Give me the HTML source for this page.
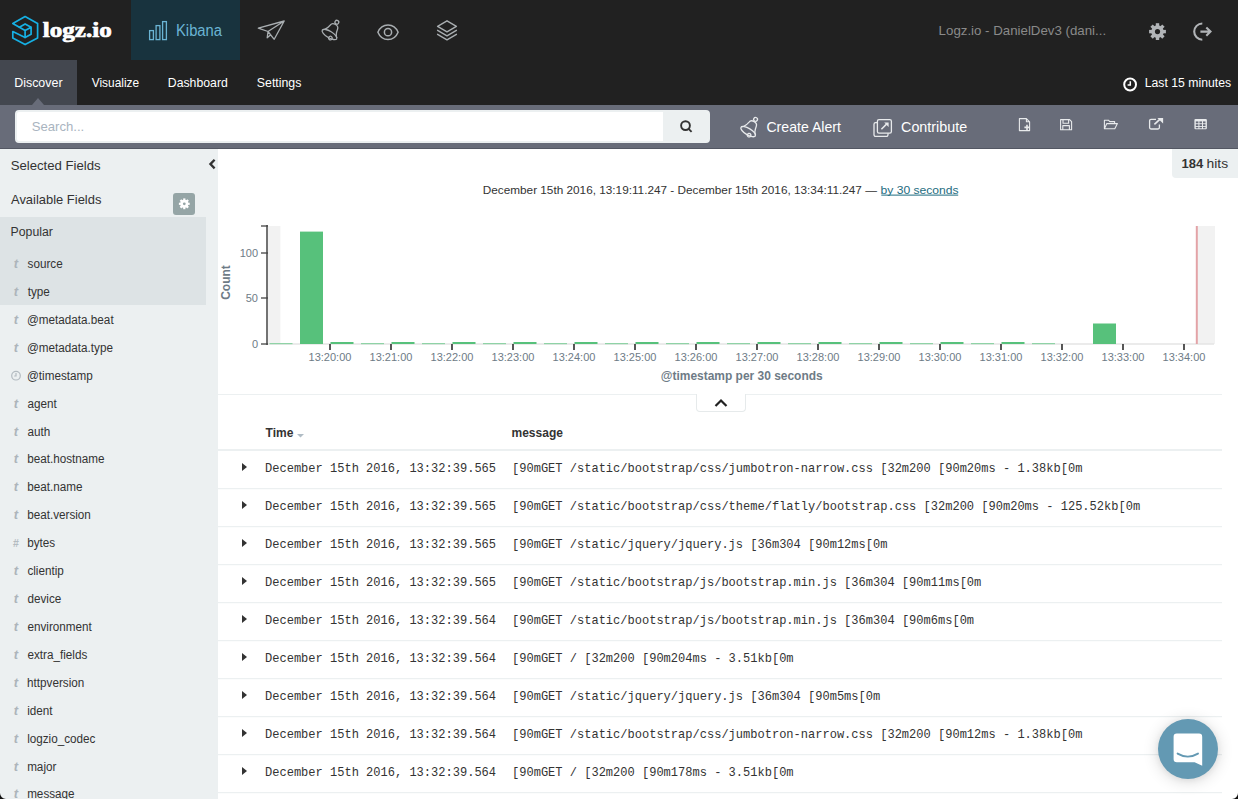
<!DOCTYPE html>
<html><head><meta charset="utf-8">
<style>
*{box-sizing:border-box;margin:0;padding:0}
html,body{width:1238px;height:799px;overflow:hidden;background:#fff;font-family:"Liberation Sans",sans-serif}
.abs{position:absolute}
#hdr{position:absolute;left:0;top:0;width:1238px;height:60px;background:#212121}
#kib{position:absolute;left:131px;top:0;width:109px;height:60px;background:#18333e}
#sub{position:absolute;left:0;top:60px;width:1238px;height:45px;background:#212121}
#disc{position:absolute;left:0;top:0;width:77px;height:45px;background:#43474f}
.nav{position:absolute;top:0;height:45px;line-height:45px;font-size:13px;color:#fff;white-space:nowrap}
#tb{position:absolute;left:0;top:105px;width:1238px;height:44px;background:#686c79;border-bottom:1px solid #535763}
#search{position:absolute;left:15px;top:5px;width:695px;height:33px;background:#fff;border-radius:4px;overflow:hidden;border:2px solid #ecf0f1}
#sbtn{position:absolute;right:0;top:0;width:45px;height:29px;background:#ecf0f1}
#side{position:absolute;left:0;top:149px;width:218px;height:650px;background:#ecf0f1}
#pop{position:absolute;left:0;top:68px;width:206px;height:88px;background:#dde3e5}
.fld{position:absolute;left:27px;font-size:13px;line-height:18px;color:#333;white-space:nowrap}
.ft{position:absolute;left:14px;font-size:13px;line-height:18px;color:#b9c1c7;font-style:italic;font-family:"Liberation Serif",serif}
.rl{position:absolute;left:218px;width:1003px;height:1px;background:#ecf0f1}
.mono{font-family:"Liberation Mono",monospace;font-size:12px;line-height:16px;color:#333;white-space:nowrap;position:absolute}
.arr{position:absolute;left:242px;width:0;height:0;border-top:4px solid transparent;border-bottom:4px solid transparent;border-left:5px solid #333}
.xl{position:absolute;top:350px;font-size:11px;line-height:14px;color:#6e7b86;white-space:nowrap;transform:translateX(-50%)}
.yl{position:absolute;font-size:11px;line-height:14px;color:#6e7b86;white-space:nowrap;text-align:right;width:40px}

</style></head><body>
<div id="hdr">
  <div id="kib"></div>
  <svg class="abs" style="left:0;top:0" width="470" height="60" viewBox="0 0 470 60">
    <g fill="none" stroke="#16b0e4" stroke-width="1.7" stroke-linejoin="round" stroke-linecap="round">
      <path d="M19.4 27.2L12.8 23.5L25.1 16.6L37.6 23.6V38L25.1 44.6L12.8 38V31.6L25.1 37.4"/>
      <path d="M19.4 27.2L25.1 23.9L31.1 27.2L25.1 30.6Z M25.1 30.6V37.4 M31.1 27.2V34.2L25.1 37.4"/>
    </g>
    <g fill="none" stroke="#6ab4d4" stroke-width="1.3">
      <rect x="149.6" y="30.6" width="3.8" height="9"/>
      <rect x="156.1" y="25.6" width="3.8" height="14"/>
      <rect x="162.6" y="21.6" width="3.8" height="18"/>
    </g>
    <g fill="none" stroke="#a9aeb1" stroke-width="1.3" stroke-linejoin="round">
      <path d="M258.3 28.2L284.2 21L274.2 39.3L268 31.5Z M268 31.5L284.2 21 M268 31.5L267.2 37.8L271 34.6"/>
      <g transform="translate(329.5 34.5) rotate(31)" fill="none" stroke="#a9aeb1" stroke-width="1.3">
        <circle cx="0" cy="-14.3" r="1.9"/>
        <path d="M-8.3 -0.6C-5.8 -2.4,-4.8 -5.5,-4.2 -8.6C-3.6 -12.6,3.6 -12.6,4.2 -8.6C4.7 -5.5,5.6 -2.4,8.3 -0.6"/>
        <ellipse cx="0" cy="0" rx="8.4" ry="3.2"/>
        <circle cx="2.6" cy="2.6" r="1.8"/>
      </g>
      <path d="M377.9 32.2C379.8 27.6,383.6 24.9,388 24.9C392.4 24.9,396.2 27.6,398.1 32.2C396.2 36.8,392.4 39.5,388 39.5C383.6 39.5,379.8 36.8,377.9 32.2Z" stroke-width="1.5"/>
      <circle cx="388" cy="32.2" r="3.6" stroke-width="1.5"/>
      <path d="M447 20.8L437.6 26.3L447 31.8L456.4 26.3Z M437.6 30.3L447 35.8L456.4 30.3 M437.6 34.3L447 39.8L456.4 34.3" stroke-width="1.4" stroke-linecap="round"/>
    </g>
  </svg>
  <svg class="abs" style="left:1140px;top:14px" width="80" height="36" viewBox="1140 14 80 36">
    <g fill="#b1b4b7">
      <g transform="translate(1157.5 31.6)">
        <rect x="-1.7" y="-8.4" width="3.4" height="16.8"/>
        <rect x="-1.7" y="-8.4" width="3.4" height="16.8" transform="rotate(45)"/>
        <rect x="-1.7" y="-8.4" width="3.4" height="16.8" transform="rotate(90)"/>
        <rect x="-1.7" y="-8.4" width="3.4" height="16.8" transform="rotate(135)"/>
        <circle r="6.3"/>
        <circle r="2.6" fill="#212121"/>
      </g>
    </g>
    <g fill="none" stroke="#b1b4b7" stroke-width="2.1">
      <path d="M1202.3 23.5A8.1 8.1 0 0 0 1202.3 39.7"/>
      <path d="M1200.4 31.6H1210.2 M1206.3 27.5L1210.5 31.6L1206.3 35.7"/>
    </g>
  </svg>
</div>
<div id="sub">
  <div id="disc"></div>
  <div class="abs" style="left:32px;top:38px;width:0;height:0;border-left:6.5px solid transparent;border-right:6.5px solid transparent;border-bottom:7px solid #686c79"></div>
  <svg class="abs" style="left:1120px;top:14px" width="20" height="20" viewBox="1120 74 20 20">
    <circle cx="1130.1" cy="84.5" r="5.9" fill="none" stroke="#fff" stroke-width="2"/>
    <path d="M1130.3 81.3V85H1127.6" fill="none" stroke="#fff" stroke-width="1.5"/>
  </svg>
</div>
<div id="tb">
  <div id="search">
    <div id="sbtn"></div>
  </div>
  <svg class="abs" style="left:0;top:0" width="1238" height="44" viewBox="0 105 1238 44">
    <g fill="none" stroke="#333" stroke-width="1.9"><circle cx="685.5" cy="125.6" r="4.4"/><path d="M688.6 128.8L691.6 131.8"/></g>
    <g fill="none" stroke="#e8eaec" stroke-width="1.3" stroke-linejoin="round">
      <g transform="translate(748.2 131.6) rotate(31)" fill="none" stroke="#e8eaec" stroke-width="1.3">
        <circle cx="0" cy="-14.3" r="1.9"/>
        <path d="M-8.3 -0.6C-5.8 -2.4,-4.8 -5.5,-4.2 -8.6C-3.6 -12.6,3.6 -12.6,4.2 -8.6C4.7 -5.5,5.6 -2.4,8.3 -0.6"/>
        <ellipse cx="0" cy="0" rx="8.4" ry="3.2"/>
        <circle cx="2.6" cy="2.6" r="1.8"/>
      </g>
      <rect x="877.4" y="119.6" width="14" height="13.6" rx="1.6"/>
      <path d="M877.4 122.6H875.6A1.6 1.6 0 0 0 874 124.2V134.8A1.6 1.6 0 0 0 875.6 136.4H886.4A1.6 1.6 0 0 0 888 134.8V133.2"/>
      <path d="M881.4 129.2L887 123.6" stroke-width="1.5"/>
    </g>
    <path d="M884.2 122.6H888.6V127Z" fill="#e8eaec"/>
    <g fill="none" stroke="#e8eaec" stroke-width="1.1" stroke-linejoin="round">
      <path d="M1019.4 118.6H1026.4L1029.6 121.8V130.6H1019.4Z M1026.4 118.6V121.8H1029.6"/>
      <path d="M1027 124.8V130 M1024.4 127.4H1029.6" stroke-width="1.6"/>
      <path d="M1060.6 119.6H1069.6L1071.6 121.6V129.8H1060.6Z M1063 119.6V123.2H1068.6V119.6 M1062.8 129.8V125.6H1069.4V129.8"/>
      <path d="M1104.4 128.8V120.2H1108.4L1109.8 121.6H1114.6V123.4 M1104.4 128.8L1106.8 123.6H1117.4L1114.8 128.8Z"/>
      <path d="M1156 119.4H1151A1.4 1.4 0 0 0 1149.6 120.8V127.6A1.4 1.4 0 0 0 1151 129H1158A1.4 1.4 0 0 0 1159.4 127.6V124.6" stroke-width="1.3"/>
      <path d="M1154.4 124.4L1160.6 118.6" stroke-width="1.6"/>
    </g>
    <path d="M1157.4 117.9H1163.1V123.6Z" fill="#e8eaec"/>
    <g fill="#e8eaec">
      <rect x="1194.4" y="118.9" width="12.5" height="10.4" rx="1.2"/>
    </g>
    <g fill="#686c79">
      <rect x="1195.8" y="121.4" width="2.6" height="1.9"/><rect x="1199.4" y="121.4" width="2.6" height="1.9"/><rect x="1203" y="121.4" width="2.5" height="1.9"/>
      <rect x="1195.8" y="124.2" width="2.6" height="1.9"/><rect x="1199.4" y="124.2" width="2.6" height="1.9"/><rect x="1203" y="124.2" width="2.5" height="1.9"/>
      <rect x="1195.8" y="127" width="2.6" height="1.3"/><rect x="1199.4" y="127" width="2.6" height="1.3"/><rect x="1203" y="127" width="2.5" height="1.3"/>
    </g>
  </svg>
</div>

<div id="side"><div id="pop"></div></div>
<div class="abs" style="left:218px;top:394px;width:1004px;height:1px;background:#ecf0f1"></div>
<div class="abs" style="left:696px;top:394px;width:50px;height:18px;background:#fff;border:1px solid #e6eaeb;border-top:none;border-radius:0 0 4px 4px"></div>
<svg class="abs" style="left:713px;top:397px" width="16" height="12" viewBox="0 0 16 12"><path d="M2.5 9L8 3.5L13.5 9" fill="none" stroke="#222" stroke-width="2.2"/></svg>
<svg class="abs" style="left:296px;top:433px" width="10" height="6" viewBox="0 0 10 6"><path d="M1 1H8L4.5 4.5Z" fill="#b0bcc5"/></svg>
<div class="abs" style="left:218px;top:449px;width:1004px;height:2px;background:#ecf0f1"></div>
<svg class="abs" style="left:200px;top:150px" width="20" height="25" viewBox="200 150 20 25"><path d="M214.6 159.8L210.4 164.1L214.6 168.4" fill="none" stroke="#333" stroke-width="2.3"/></svg>
<div class="abs" style="left:173px;top:193px;width:22px;height:22px;background:#95a5a6;border-radius:3px"></div>
<svg class="abs" style="left:173px;top:193px" width="22" height="22" viewBox="173 193 22 22"><g transform="translate(184.3 203.8)" fill="#fff"><rect x="-1.1" y="-5.4" width="2.2" height="10.8"/><rect x="-1.1" y="-5.4" width="2.2" height="10.8" transform="rotate(45)"/><rect x="-1.1" y="-5.4" width="2.2" height="10.8" transform="rotate(90)"/><rect x="-1.1" y="-5.4" width="2.2" height="10.8" transform="rotate(135)"/><circle r="4"/><circle r="1.4" fill="#95a5a6"/></g></svg>
<div class="abs" style="left:1172px;top:149px;width:66px;height:29px;background:#ecf0f1;border-bottom-left-radius:4px"></div>

<svg class="abs" style="left:0;top:0" width="1238" height="799" viewBox="0 0 1238 799">
<rect x="268" y="226" width="12.4" height="118" fill="#f2f2f2"/>
<rect x="1196" y="226" width="19" height="118" fill="#f2f2f2"/>
<line x1="268" y1="344" x2="1214" y2="344" stroke="#e4e4e4" stroke-width="1.5"/>
<rect x="269.5" y="343" width="23" height="1.2" fill="#8fd3a6"/>
<rect x="300.0" y="231.6" width="23" height="112.4" fill="#57c17b"/>
<rect x="330.5" y="342" width="23" height="2" fill="#57c17b"/>
<rect x="361.0" y="343" width="23" height="1.2" fill="#8fd3a6"/>
<rect x="391.5" y="342" width="23" height="2" fill="#57c17b"/>
<rect x="422.0" y="343" width="23" height="1.2" fill="#8fd3a6"/>
<rect x="452.5" y="342" width="23" height="2" fill="#57c17b"/>
<rect x="483.0" y="343" width="23" height="1.2" fill="#8fd3a6"/>
<rect x="513.5" y="342" width="23" height="2" fill="#57c17b"/>
<rect x="544.0" y="343" width="23" height="1.2" fill="#8fd3a6"/>
<rect x="574.5" y="342" width="23" height="2" fill="#57c17b"/>
<rect x="605.0" y="343" width="23" height="1.2" fill="#8fd3a6"/>
<rect x="635.5" y="342" width="23" height="2" fill="#57c17b"/>
<rect x="666.0" y="343" width="23" height="1.2" fill="#8fd3a6"/>
<rect x="696.5" y="342" width="23" height="2" fill="#57c17b"/>
<rect x="727.0" y="343" width="23" height="1.2" fill="#8fd3a6"/>
<rect x="757.5" y="342" width="23" height="2" fill="#57c17b"/>
<rect x="788.0" y="343" width="23" height="1.2" fill="#8fd3a6"/>
<rect x="818.5" y="342" width="23" height="2" fill="#57c17b"/>
<rect x="849.0" y="343" width="23" height="1.2" fill="#8fd3a6"/>
<rect x="879.5" y="342" width="23" height="2" fill="#57c17b"/>
<rect x="910.0" y="343" width="23" height="1.2" fill="#8fd3a6"/>
<rect x="940.5" y="342" width="23" height="2" fill="#57c17b"/>
<rect x="971.0" y="343" width="23" height="1.2" fill="#8fd3a6"/>
<rect x="1001.5" y="342" width="23" height="2" fill="#57c17b"/>
<rect x="1032.0" y="343" width="23" height="1.2" fill="#8fd3a6"/>
<rect x="1093.0" y="323.5" width="23" height="20.5" fill="#57c17b"/>
<line x1="267" y1="225" x2="267" y2="345" stroke="#444" stroke-width="1.5"/>
<line x1="261" y1="226" x2="268" y2="226" stroke="#444" stroke-width="1.3"/>
<line x1="261" y1="253" x2="268" y2="253" stroke="#444" stroke-width="1.3"/>
<line x1="261" y1="298" x2="268" y2="298" stroke="#444" stroke-width="1.3"/>
<line x1="261" y1="344" x2="268" y2="344" stroke="#444" stroke-width="1.3"/>
<line x1="330" y1="344" x2="330" y2="350" stroke="#444" stroke-width="1.8"/>
<line x1="391" y1="344" x2="391" y2="350" stroke="#444" stroke-width="1.8"/>
<line x1="452" y1="344" x2="452" y2="350" stroke="#444" stroke-width="1.8"/>
<line x1="513" y1="344" x2="513" y2="350" stroke="#444" stroke-width="1.8"/>
<line x1="574" y1="344" x2="574" y2="350" stroke="#444" stroke-width="1.8"/>
<line x1="635" y1="344" x2="635" y2="350" stroke="#444" stroke-width="1.8"/>
<line x1="696" y1="344" x2="696" y2="350" stroke="#444" stroke-width="1.8"/>
<line x1="757" y1="344" x2="757" y2="350" stroke="#444" stroke-width="1.8"/>
<line x1="818" y1="344" x2="818" y2="350" stroke="#444" stroke-width="1.8"/>
<line x1="879" y1="344" x2="879" y2="350" stroke="#444" stroke-width="1.8"/>
<line x1="940" y1="344" x2="940" y2="350" stroke="#444" stroke-width="1.8"/>
<line x1="1001" y1="344" x2="1001" y2="350" stroke="#444" stroke-width="1.8"/>
<line x1="1062" y1="344" x2="1062" y2="350" stroke="#444" stroke-width="1.8"/>
<line x1="1123" y1="344" x2="1123" y2="350" stroke="#444" stroke-width="1.8"/>
<line x1="1184" y1="344" x2="1184" y2="350" stroke="#444" stroke-width="1.8"/>
<line x1="1196.8" y1="226" x2="1196.8" y2="344" stroke="#e3a3a7" stroke-width="2"/>
</svg>
<svg class="abs" style="left:0;top:0" width="1238" height="799" viewBox="0 0 1238 799">
<path d="M242 463L247 467L242 471Z" fill="#333"/><rect x="218" y="488" width="1004" height="1.2" fill="#ecf0f1"/><path d="M242 501L247 505L242 509Z" fill="#333"/><rect x="218" y="526" width="1004" height="1.2" fill="#ecf0f1"/><path d="M242 539L247 543L242 547Z" fill="#333"/><rect x="218" y="564" width="1004" height="1.2" fill="#ecf0f1"/><path d="M242 577L247 581L242 585Z" fill="#333"/><rect x="218" y="602" width="1004" height="1.2" fill="#ecf0f1"/><path d="M242 615L247 619L242 623Z" fill="#333"/><rect x="218" y="640" width="1004" height="1.2" fill="#ecf0f1"/><path d="M242 653L247 657L242 661Z" fill="#333"/><rect x="218" y="678" width="1004" height="1.2" fill="#ecf0f1"/><path d="M242 691L247 695L242 699Z" fill="#333"/><rect x="218" y="716" width="1004" height="1.2" fill="#ecf0f1"/><path d="M242 729L247 733L242 737Z" fill="#333"/><rect x="218" y="754" width="1004" height="1.2" fill="#ecf0f1"/><path d="M242 767L247 771L242 775Z" fill="#333"/><rect x="218" y="792" width="1004" height="1.2" fill="#ecf0f1"/>
<g fill="none" stroke="#b3bbc1" stroke-width="1.2"><circle cx="16" cy="375.68" r="4.3"/><path d="M16 373.08V375.98H14.2"/></g>
<text x="42.80" y="37.00" font-size="20" fill="#fff" font-weight="bold" style="font-family:'Liberation Serif',serif" textLength="68.89" lengthAdjust="spacingAndGlyphs" stroke="#fff" stroke-width="0.7">logz.io</text>
<text x="176.02" y="36.20" font-size="16" fill="#6ab4d4" font-weight="normal" style="font-family:'Liberation Sans',sans-serif" textLength="45.96" lengthAdjust="spacingAndGlyphs">Kibana</text>
<text x="938.64" y="35.20" font-size="13" fill="#8a8a8a" font-weight="normal" style="font-family:'Liberation Sans',sans-serif" textLength="167.50" lengthAdjust="spacingAndGlyphs">Logz.io - DanielDev3 (dani...</text>
<text x="14.21" y="87.20" font-size="12.6" fill="#fff" font-weight="normal" style="font-family:'Liberation Sans',sans-serif" textLength="48.34" lengthAdjust="spacingAndGlyphs">Discover</text>
<text x="91.74" y="87.20" font-size="12.6" fill="#fff" font-weight="normal" style="font-family:'Liberation Sans',sans-serif" textLength="47.38" lengthAdjust="spacingAndGlyphs">Visualize</text>
<text x="167.82" y="87.30" font-size="12.6" fill="#fff" font-weight="normal" style="font-family:'Liberation Sans',sans-serif" textLength="60.01" lengthAdjust="spacingAndGlyphs">Dashboard</text>
<text x="256.84" y="87.30" font-size="12.6" fill="#fff" font-weight="normal" style="font-family:'Liberation Sans',sans-serif" textLength="44.57" lengthAdjust="spacingAndGlyphs">Settings</text>
<text x="1144.72" y="86.60" font-size="12" fill="#fff" font-weight="normal" style="font-family:'Liberation Sans',sans-serif" textLength="86.40" lengthAdjust="spacingAndGlyphs">Last 15 minutes</text>
<text x="31.71" y="131.10" font-size="13.3" fill="#a9b4c0" font-weight="normal" style="font-family:'Liberation Sans',sans-serif" textLength="52.50" lengthAdjust="spacingAndGlyphs">Search...</text>
<text x="766.39" y="132.40" font-size="14.6" fill="#fff" font-weight="normal" style="font-family:'Liberation Sans',sans-serif" textLength="74.58" lengthAdjust="spacingAndGlyphs">Create Alert</text>
<text x="901.08" y="132.40" font-size="14.6" fill="#fff" font-weight="normal" style="font-family:'Liberation Sans',sans-serif" textLength="66.04" lengthAdjust="spacingAndGlyphs">Contribute</text>
<text x="10.71" y="170.30" font-size="13" fill="#333" font-weight="normal" style="font-family:'Liberation Sans',sans-serif" textLength="89.98" lengthAdjust="spacingAndGlyphs">Selected Fields</text>
<text x="11.00" y="203.90" font-size="13" fill="#333" font-weight="normal" style="font-family:'Liberation Sans',sans-serif" textLength="90.36" lengthAdjust="spacingAndGlyphs">Available Fields</text>
<text x="10.62" y="236.40" font-size="12" fill="#333" font-weight="normal" style="font-family:'Liberation Sans',sans-serif" textLength="42.29" lengthAdjust="spacingAndGlyphs">Popular</text>
<text x="27.55" y="268.00" font-size="12" fill="#333" font-weight="normal" style="font-family:'Liberation Sans',sans-serif" textLength="35.12" lengthAdjust="spacingAndGlyphs">source</text>
<text x="13.87" y="268.00" font-size="13" fill="#adb5bb" font-weight="bold" style="font-family:'Liberation Sans',sans-serif" font-style="italic">t</text>
<text x="27.72" y="295.92" font-size="12" fill="#333" font-weight="normal" style="font-family:'Liberation Sans',sans-serif" textLength="22.11" lengthAdjust="spacingAndGlyphs">type</text>
<text x="13.87" y="295.92" font-size="13" fill="#adb5bb" font-weight="bold" style="font-family:'Liberation Sans',sans-serif" font-style="italic">t</text>
<text x="26.96" y="323.84" font-size="12" fill="#333" font-weight="normal" style="font-family:'Liberation Sans',sans-serif" textLength="86.68" lengthAdjust="spacingAndGlyphs">@metadata.beat</text>
<text x="13.87" y="323.84" font-size="13" fill="#adb5bb" font-weight="bold" style="font-family:'Liberation Sans',sans-serif" font-style="italic">t</text>
<text x="26.96" y="351.76" font-size="12" fill="#333" font-weight="normal" style="font-family:'Liberation Sans',sans-serif" textLength="86.03" lengthAdjust="spacingAndGlyphs">@metadata.type</text>
<text x="13.87" y="351.76" font-size="13" fill="#adb5bb" font-weight="bold" style="font-family:'Liberation Sans',sans-serif" font-style="italic">t</text>
<text x="26.96" y="379.68" font-size="12" fill="#333" font-weight="normal" style="font-family:'Liberation Sans',sans-serif" textLength="65.84" lengthAdjust="spacingAndGlyphs">@timestamp</text>
<text x="27.43" y="407.60" font-size="12" fill="#333" font-weight="normal" style="font-family:'Liberation Sans',sans-serif" textLength="29.28" lengthAdjust="spacingAndGlyphs">agent</text>
<text x="13.87" y="407.60" font-size="13" fill="#adb5bb" font-weight="bold" style="font-family:'Liberation Sans',sans-serif" font-style="italic">t</text>
<text x="27.43" y="435.52" font-size="12" fill="#333" font-weight="normal" style="font-family:'Liberation Sans',sans-serif" textLength="22.77" lengthAdjust="spacingAndGlyphs">auth</text>
<text x="13.87" y="435.52" font-size="13" fill="#adb5bb" font-weight="bold" style="font-family:'Liberation Sans',sans-serif" font-style="italic">t</text>
<text x="27.14" y="463.44" font-size="12" fill="#333" font-weight="normal" style="font-family:'Liberation Sans',sans-serif" textLength="77.41" lengthAdjust="spacingAndGlyphs">beat.hostname</text>
<text x="13.87" y="463.44" font-size="13" fill="#adb5bb" font-weight="bold" style="font-family:'Liberation Sans',sans-serif" font-style="italic">t</text>
<text x="27.14" y="491.36" font-size="12" fill="#333" font-weight="normal" style="font-family:'Liberation Sans',sans-serif" textLength="55.29" lengthAdjust="spacingAndGlyphs">beat.name</text>
<text x="13.87" y="491.36" font-size="13" fill="#adb5bb" font-weight="bold" style="font-family:'Liberation Sans',sans-serif" font-style="italic">t</text>
<text x="27.14" y="519.28" font-size="12" fill="#333" font-weight="normal" style="font-family:'Liberation Sans',sans-serif" textLength="63.74" lengthAdjust="spacingAndGlyphs">beat.version</text>
<text x="13.87" y="519.28" font-size="13" fill="#adb5bb" font-weight="bold" style="font-family:'Liberation Sans',sans-serif" font-style="italic">t</text>
<text x="27.14" y="547.20" font-size="12" fill="#333" font-weight="normal" style="font-family:'Liberation Sans',sans-serif" textLength="27.96" lengthAdjust="spacingAndGlyphs">bytes</text>
<text x="13.04" y="546.70" font-size="10.5" fill="#b3bbc1" font-weight="bold" style="font-family:'Liberation Sans',sans-serif">#</text>
<text x="27.43" y="575.12" font-size="12" fill="#333" font-weight="normal" style="font-family:'Liberation Sans',sans-serif" textLength="36.42" lengthAdjust="spacingAndGlyphs">clientip</text>
<text x="13.87" y="575.12" font-size="13" fill="#adb5bb" font-weight="bold" style="font-family:'Liberation Sans',sans-serif" font-style="italic">t</text>
<text x="27.43" y="603.04" font-size="12" fill="#333" font-weight="normal" style="font-family:'Liberation Sans',sans-serif" textLength="33.82" lengthAdjust="spacingAndGlyphs">device</text>
<text x="13.87" y="603.04" font-size="13" fill="#adb5bb" font-weight="bold" style="font-family:'Liberation Sans',sans-serif" font-style="italic">t</text>
<text x="27.43" y="630.96" font-size="12" fill="#333" font-weight="normal" style="font-family:'Liberation Sans',sans-serif" textLength="64.39" lengthAdjust="spacingAndGlyphs">environment</text>
<text x="13.87" y="630.96" font-size="13" fill="#adb5bb" font-weight="bold" style="font-family:'Liberation Sans',sans-serif" font-style="italic">t</text>
<text x="27.43" y="658.88" font-size="12" fill="#333" font-weight="normal" style="font-family:'Liberation Sans',sans-serif" textLength="59.83" lengthAdjust="spacingAndGlyphs">extra_fields</text>
<text x="13.87" y="658.88" font-size="13" fill="#adb5bb" font-weight="bold" style="font-family:'Liberation Sans',sans-serif" font-style="italic">t</text>
<text x="27.08" y="686.80" font-size="12" fill="#333" font-weight="normal" style="font-family:'Liberation Sans',sans-serif" textLength="57.23" lengthAdjust="spacingAndGlyphs">httpversion</text>
<text x="13.87" y="686.80" font-size="13" fill="#adb5bb" font-weight="bold" style="font-family:'Liberation Sans',sans-serif" font-style="italic">t</text>
<text x="27.14" y="714.72" font-size="12" fill="#333" font-weight="normal" style="font-family:'Liberation Sans',sans-serif" textLength="25.37" lengthAdjust="spacingAndGlyphs">ident</text>
<text x="13.87" y="714.72" font-size="13" fill="#adb5bb" font-weight="bold" style="font-family:'Liberation Sans',sans-serif" font-style="italic">t</text>
<text x="27.14" y="742.64" font-size="12" fill="#333" font-weight="normal" style="font-family:'Liberation Sans',sans-serif" textLength="68.30" lengthAdjust="spacingAndGlyphs">logzio_codec</text>
<text x="13.87" y="742.64" font-size="13" fill="#adb5bb" font-weight="bold" style="font-family:'Liberation Sans',sans-serif" font-style="italic">t</text>
<text x="27.14" y="770.56" font-size="12" fill="#333" font-weight="normal" style="font-family:'Liberation Sans',sans-serif" textLength="29.26" lengthAdjust="spacingAndGlyphs">major</text>
<text x="13.87" y="770.56" font-size="13" fill="#adb5bb" font-weight="bold" style="font-family:'Liberation Sans',sans-serif" font-style="italic">t</text>
<text x="27.14" y="798.48" font-size="12" fill="#333" font-weight="normal" style="font-family:'Liberation Sans',sans-serif" textLength="47.48" lengthAdjust="spacingAndGlyphs">message</text>
<text x="13.87" y="798.48" font-size="13" fill="#adb5bb" font-weight="bold" style="font-family:'Liberation Sans',sans-serif" font-style="italic">t</text>
<text x="482.76" y="193.80" font-size="11.6" fill="#333" font-weight="normal" style="font-family:'Liberation Sans',sans-serif" textLength="394.16" lengthAdjust="spacingAndGlyphs">December 15th 2016, 13:19:11.247 - December 15th 2016, 13:34:11.247 —</text>
<text x="880.51" y="193.80" font-size="11.6" fill="#1e6c80" font-weight="normal" style="font-family:'Liberation Sans',sans-serif" textLength="78.10" lengthAdjust="spacingAndGlyphs">by 30 seconds</text>
<rect x="881.3" y="194.6" width="76.9" height="1" fill="#1e6c80"/>
<text x="1181.62" y="168.00" font-size="13" fill="#333" font-weight="bold" style="font-family:'Liberation Sans',sans-serif">184</text>
<text x="1206.53" y="168.00" font-size="13" fill="#333" font-weight="normal" style="font-family:'Liberation Sans',sans-serif" textLength="21.57" lengthAdjust="spacingAndGlyphs">hits</text>
<text x="660.84" y="379.60" font-size="12" fill="#6e7b86" font-weight="bold" style="font-family:'Liberation Sans',sans-serif" textLength="161.85" lengthAdjust="spacingAndGlyphs">@timestamp per 30 seconds</text>
<text x="330" y="360.5" font-size="11" fill="#6e7b86" text-anchor="middle" style="font-family:'Liberation Sans',sans-serif">13:20:00</text>
<text x="391" y="360.5" font-size="11" fill="#6e7b86" text-anchor="middle" style="font-family:'Liberation Sans',sans-serif">13:21:00</text>
<text x="452" y="360.5" font-size="11" fill="#6e7b86" text-anchor="middle" style="font-family:'Liberation Sans',sans-serif">13:22:00</text>
<text x="513" y="360.5" font-size="11" fill="#6e7b86" text-anchor="middle" style="font-family:'Liberation Sans',sans-serif">13:23:00</text>
<text x="574" y="360.5" font-size="11" fill="#6e7b86" text-anchor="middle" style="font-family:'Liberation Sans',sans-serif">13:24:00</text>
<text x="635" y="360.5" font-size="11" fill="#6e7b86" text-anchor="middle" style="font-family:'Liberation Sans',sans-serif">13:25:00</text>
<text x="696" y="360.5" font-size="11" fill="#6e7b86" text-anchor="middle" style="font-family:'Liberation Sans',sans-serif">13:26:00</text>
<text x="757" y="360.5" font-size="11" fill="#6e7b86" text-anchor="middle" style="font-family:'Liberation Sans',sans-serif">13:27:00</text>
<text x="818" y="360.5" font-size="11" fill="#6e7b86" text-anchor="middle" style="font-family:'Liberation Sans',sans-serif">13:28:00</text>
<text x="879" y="360.5" font-size="11" fill="#6e7b86" text-anchor="middle" style="font-family:'Liberation Sans',sans-serif">13:29:00</text>
<text x="940" y="360.5" font-size="11" fill="#6e7b86" text-anchor="middle" style="font-family:'Liberation Sans',sans-serif">13:30:00</text>
<text x="1001" y="360.5" font-size="11" fill="#6e7b86" text-anchor="middle" style="font-family:'Liberation Sans',sans-serif">13:31:00</text>
<text x="1062" y="360.5" font-size="11" fill="#6e7b86" text-anchor="middle" style="font-family:'Liberation Sans',sans-serif">13:32:00</text>
<text x="1123" y="360.5" font-size="11" fill="#6e7b86" text-anchor="middle" style="font-family:'Liberation Sans',sans-serif">13:33:00</text>
<text x="1184" y="360.5" font-size="11" fill="#6e7b86" text-anchor="middle" style="font-family:'Liberation Sans',sans-serif">13:34:00</text>
<text x="258" y="257" font-size="11" fill="#6e7b86" text-anchor="end" style="font-family:'Liberation Sans',sans-serif">100</text>
<text x="258" y="302" font-size="11" fill="#6e7b86" text-anchor="end" style="font-family:'Liberation Sans',sans-serif">50</text>
<text x="258" y="348" font-size="11" fill="#6e7b86" text-anchor="end" style="font-family:'Liberation Sans',sans-serif">0</text>
<text transform="translate(229.5 282.5) rotate(-90)" x="0" y="0" font-size="12" font-weight="bold" fill="#6e7b86" text-anchor="middle" style="font-family:'Liberation Sans',sans-serif">Count</text>
<text x="265.58" y="437.00" font-size="12" fill="#333" font-weight="bold" style="font-family:'Liberation Sans',sans-serif">Time</text>
<text x="511.52" y="437.00" font-size="12" fill="#333" font-weight="bold" style="font-family:'Liberation Sans',sans-serif">message</text>
<text x="265" y="472.3" font-size="13" fill="#333" style="font-family:'Liberation Mono',monospace" textLength="231.04" lengthAdjust="spacingAndGlyphs">December 15th 2016, 13:32:39.565</text>
<text x="512" y="472.3" font-size="13" fill="#333" style="font-family:'Liberation Mono',monospace" textLength="570.38" lengthAdjust="spacingAndGlyphs">[90mGET /static/bootstrap/css/jumbotron-narrow.css [32m200 [90m20ms - 1.38kb[0m</text>
<text x="265" y="510.3" font-size="13" fill="#333" style="font-family:'Liberation Mono',monospace" textLength="231.04" lengthAdjust="spacingAndGlyphs">December 15th 2016, 13:32:39.565</text>
<text x="512" y="510.3" font-size="13" fill="#333" style="font-family:'Liberation Mono',monospace" textLength="628.14" lengthAdjust="spacingAndGlyphs">[90mGET /static/bootstrap/css/theme/flatly/bootstrap.css [32m200 [90m20ms - 125.52kb[0m</text>
<text x="265" y="548.3" font-size="13" fill="#333" style="font-family:'Liberation Mono',monospace" textLength="231.04" lengthAdjust="spacingAndGlyphs">December 15th 2016, 13:32:39.565</text>
<text x="512" y="548.3" font-size="13" fill="#333" style="font-family:'Liberation Mono',monospace" textLength="375.44" lengthAdjust="spacingAndGlyphs">[90mGET /static/jquery/jquery.js [36m304 [90m12ms[0m</text>
<text x="265" y="586.3" font-size="13" fill="#333" style="font-family:'Liberation Mono',monospace" textLength="231.04" lengthAdjust="spacingAndGlyphs">December 15th 2016, 13:32:39.565</text>
<text x="512" y="586.3" font-size="13" fill="#333" style="font-family:'Liberation Mono',monospace" textLength="469.30" lengthAdjust="spacingAndGlyphs">[90mGET /static/bootstrap/js/bootstrap.min.js [36m304 [90m11ms[0m</text>
<text x="265" y="624.3" font-size="13" fill="#333" style="font-family:'Liberation Mono',monospace" textLength="231.04" lengthAdjust="spacingAndGlyphs">December 15th 2016, 13:32:39.564</text>
<text x="512" y="624.3" font-size="13" fill="#333" style="font-family:'Liberation Mono',monospace" textLength="462.08" lengthAdjust="spacingAndGlyphs">[90mGET /static/bootstrap/js/bootstrap.min.js [36m304 [90m6ms[0m</text>
<text x="265" y="662.3" font-size="13" fill="#333" style="font-family:'Liberation Mono',monospace" textLength="231.04" lengthAdjust="spacingAndGlyphs">December 15th 2016, 13:32:39.564</text>
<text x="512" y="662.3" font-size="13" fill="#333" style="font-family:'Liberation Mono',monospace" textLength="281.58" lengthAdjust="spacingAndGlyphs">[90mGET / [32m200 [90m204ms - 3.51kb[0m</text>
<text x="265" y="700.3" font-size="13" fill="#333" style="font-family:'Liberation Mono',monospace" textLength="231.04" lengthAdjust="spacingAndGlyphs">December 15th 2016, 13:32:39.564</text>
<text x="512" y="700.3" font-size="13" fill="#333" style="font-family:'Liberation Mono',monospace" textLength="368.22" lengthAdjust="spacingAndGlyphs">[90mGET /static/jquery/jquery.js [36m304 [90m5ms[0m</text>
<text x="265" y="738.3" font-size="13" fill="#333" style="font-family:'Liberation Mono',monospace" textLength="231.04" lengthAdjust="spacingAndGlyphs">December 15th 2016, 13:32:39.564</text>
<text x="512" y="738.3" font-size="13" fill="#333" style="font-family:'Liberation Mono',monospace" textLength="570.38" lengthAdjust="spacingAndGlyphs">[90mGET /static/bootstrap/css/jumbotron-narrow.css [32m200 [90m12ms - 1.38kb[0m</text>
<text x="265" y="776.3" font-size="13" fill="#333" style="font-family:'Liberation Mono',monospace" textLength="231.04" lengthAdjust="spacingAndGlyphs">December 15th 2016, 13:32:39.564</text>
<text x="512" y="776.3" font-size="13" fill="#333" style="font-family:'Liberation Mono',monospace" textLength="281.58" lengthAdjust="spacingAndGlyphs">[90mGET / [32m200 [90m178ms - 3.51kb[0m</text>
</svg>
<div class="abs" style="left:1158px;top:719px;width:60px;height:60px;border-radius:50%;background:#6399b3;box-shadow:0 1px 6px rgba(0,0,0,0.06),0 2px 16px rgba(0,0,0,0.16)"></div>
<svg class="abs" style="left:1158px;top:719px" width="60" height="60" viewBox="1158 719 60 60">
  <path d="M1176.8 733.5H1199A3.2 3.2 0 0 1 1202.2 736.7V765.8L1194.6 762.2H1176.8A3.2 3.2 0 0 1 1173.6 759V736.7A3.2 3.2 0 0 1 1176.8 733.5Z" fill="#fff"/>
  <path d="M1177.6 753.6Q1187.8 759.6 1198 753.6" fill="none" stroke="#6399b3" stroke-width="1.9" stroke-linecap="round"/>
</svg>
<svg class="abs" style="left:0;top:789px" width="1238" height="10" viewBox="0 789 1238 10">
  <path d="M1238 793V799H1232A6 6 0 0 0 1238 793Z" fill="#111"/>
  <path d="M0 793V799H6A6 6 0 0 1 0 793Z" fill="#111"/>
</svg>

</body></html>
